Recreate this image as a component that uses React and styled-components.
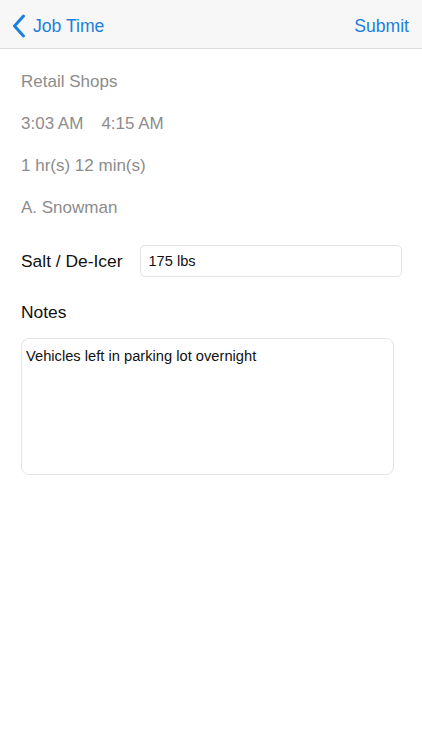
import React from "react";
import styled, { createGlobalStyle } from "styled-components";

const GlobalStyle = createGlobalStyle`
  html, body {
    margin: 0;
    padding: 0;
    background: #ffffff;
    font-family: "Liberation Sans", Arial, sans-serif;
  }
`;

const Page = styled.div`
  width: 422px;
  min-height: 750px;
  background: #fff;
`;

const NavBar = styled.div`
  height: 48px;
  display: flex;
  align-items: center;
  justify-content: space-between;
  padding: 0 13px 0 12px;
  background: #f7f7f7;
  border-bottom: 1px solid #dcdcdc;
`;

const NavButton = styled.div`
  display: flex;
  align-items: center;
  gap: 7px;
  color: #1c7fde;
  font-size: 17.6px;
  padding-top: 4px;
`;

const Content = styled.div`
  padding: 12px 20px 0 21px;
`;

const InfoRow = styled.div`
  height: 42px;
  display: flex;
  align-items: center;
  color: #8c8c8c;
  font-size: 17px;
`;

const TimeGap = styled.span`
  display: inline-block;
  width: 18px;
`;

const FieldRow = styled.div`
  display: flex;
  align-items: center;
  margin-top: 16px;
  gap: 18px;
`;

const Label = styled.div`
  color: #111;
  font-size: 17.4px;
`;

const Input = styled.div`
  flex: 1;
  height: 30px;
  display: flex;
  align-items: center;
  padding: 0 7px;
  border: 1px solid #e3e3e3;
  border-radius: 5px;
  font-size: 14.6px;
  color: #111;
`;

const NotesLabel = styled(Label)`
  margin-top: 25px;
  height: 22px;
`;

const TextArea = styled.div`
  margin-top: 14px;
  width: 363px;
  height: 120px;
  padding: 9px 4px 6px;
  border: 1px solid #e3e3e3;
  border-radius: 8px;
  font-size: 14.7px;
  color: #111;
`;

const Chevron = () => (
  <svg width="14" height="24" viewBox="0 0 14 24">
    <path
      d="M11.5 2 L2.5 12 L11.5 22"
      fill="none"
      stroke="#1c7fde"
      strokeWidth="3"
      strokeLinecap="round"
      strokeLinejoin="round"
    />
  </svg>
);

export default function App() {
  return (
    <Page>
      <GlobalStyle />
      <NavBar>
        <NavButton>
          <Chevron />
          Job Time
        </NavButton>
        <NavButton>Submit</NavButton>
      </NavBar>
      <Content>
        <InfoRow>Retail Shops</InfoRow>
        <InfoRow>
          3:03 AM<TimeGap />4:15 AM
        </InfoRow>
        <InfoRow>1 hr(s) 12 min(s)</InfoRow>
        <InfoRow>A. Snowman</InfoRow>
        <FieldRow>
          <Label>Salt / De-Icer</Label>
          <Input>175 lbs</Input>
        </FieldRow>
        <NotesLabel>Notes</NotesLabel>
        <TextArea>Vehicles left in parking lot overnight</TextArea>
      </Content>
    </Page>
  );
}
